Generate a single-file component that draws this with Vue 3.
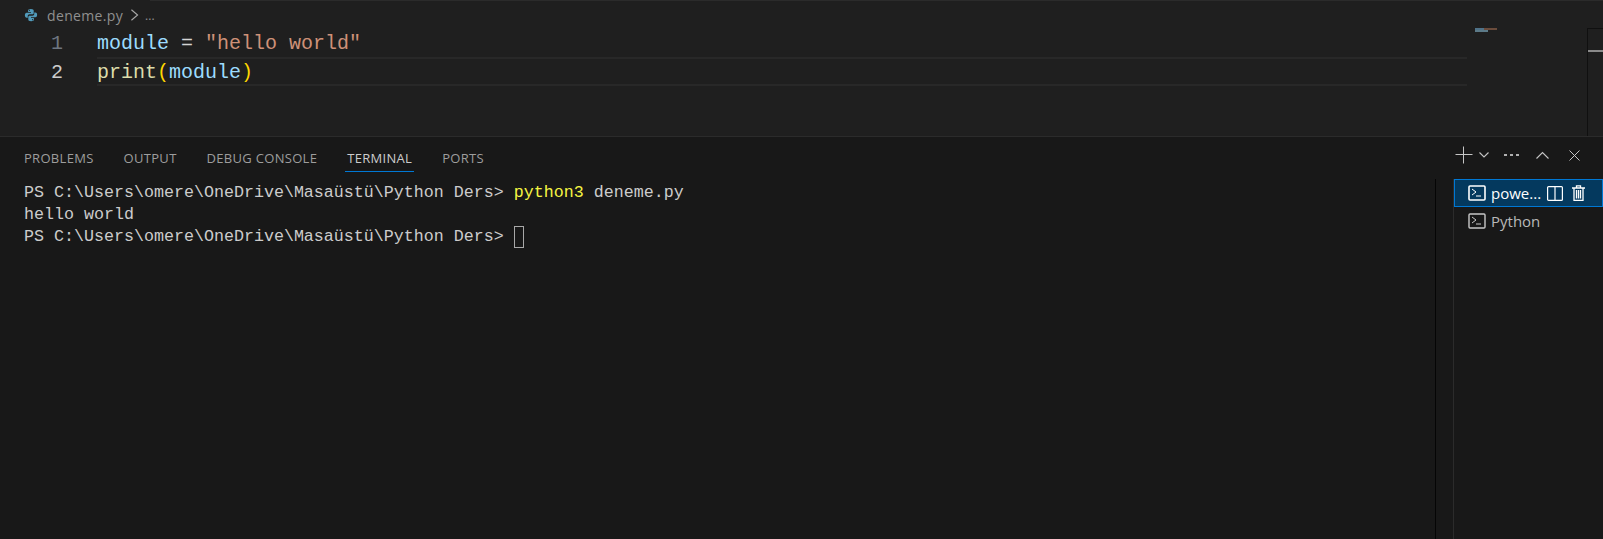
<script setup>
const tabs = [
  { name: 'PROBLEMS' },
  { name: 'OUTPUT' },
  { name: 'DEBUG CONSOLE' },
  { name: 'TERMINAL', active: true },
  { name: 'PORTS' }
]
const prompt = 'PS C:\\Users\\omere\\OneDrive\\Masaüstü\\Python Ders>'
</script>

<template>
  <div class="window">
    <section class="editor">
      <div class="topline"></div>
      <div class="crumbs">
        <svg class="py" viewBox="0 0 16 16" width="14" height="14">
          <path fill="#519aba" d="M7.900 1C5.200 1 4.700 2 4.700 3v1.700H8v.6H3C1.800 5.300 1 6.300 1 8.200s.9 2.800 2 2.800h1.300V9.200c0-1.100.9-2 2-2h3.200c.9 0 1.600-.7 1.600-1.600V3c0-1.100-1-2-3.200-2zM6.200 2.100a.6.6 0 1 1 0 1.200.6.6 0 0 1 0-1.200z"/>
          <path fill="#519aba" d="M8.100 15c2.700 0 3.200-1 3.200-2v-1.700H8v-.6h5c1.200 0 2-1 2-2.900s-.9-2.800-2-2.800h-1.300v1.800c0 1.100-.9 2-2 2H6.500c-.9 0-1.600.7-1.600 1.600V13c0 1.100 1 2 3.200 2zm1.700-1.100a.6.6 0 1 1 0-1.200.6.6 0 0 1 0 1.200z"/>
        </svg>
        <span class="file">deneme.py</span>
        <svg class="sep" viewBox="0 0 10 16" width="9" height="14"><path d="M1.500 2l7 6-7 6" fill="none" stroke="#a8a8a8" stroke-width="1.300"/></svg>
        <span class="more">...</span>
      </div>
      <div class="code">
        <div class="line">
          <span class="num">1</span>
          <span class="src"><span class="var">module</span> <span class="op">=</span> <span class="str">"hello world"</span></span>
        </div>
        <div class="line current">
          <span class="num now">2</span>
          <span class="src"><span class="fn">print</span><span class="paren">(</span><span class="var">module</span><span class="paren">)</span></span>
        </div>
      </div>
      <div class="minimap">
        <i class="m1"></i><i class="m2"></i><i class="m3"></i>
      </div>
      <div class="ruler"><i></i></div>
    </section>

    <section class="panel">
      <header class="panel-head">
        <nav class="tabs">
          <span v-for="t in tabs" :key="t.name" class="tab" :class="{ active: t.active }">{{ t.name }}</span>
        </nav>
        <div class="actions">
          <svg width="18" height="18" viewBox="0 0 18 18"><path d="M8.500 0.500v17M0.500 8.500h17" stroke="#c5c5c5" stroke-width="1" fill="none"/></svg>
          <svg class="caret" width="10" height="6" viewBox="0 0 10 6"><path d="M0.500 0.500L5 5l4.500-4.500" stroke="#c5c5c5" stroke-width="1.100" fill="none"/></svg>
          <svg class="dots" width="15" height="3" viewBox="0 0 15 3"><path d="M0 0h3v2H0zM6 0h3v2H6zM12 0h3v2h-3z" fill="#b0b0b0"/></svg>
          <svg class="up" width="13" height="8" viewBox="0 0 13 8"><path d="M0.500 7.500l6-6 6 6" stroke="#c5c5c5" stroke-width="1.100" fill="none"/></svg>
          <svg class="close" width="11" height="11" viewBox="0 0 11 11"><path d="M0.500 0.500l10 10M10.500 0.500l-10 10" stroke="#c5c5c5" stroke-width="1" fill="none"/></svg>
        </div>
      </header>
      <div class="panel-body">
        <div class="term">
          <div class="tline">{{ prompt }} <span class="cmd">python3</span> deneme.py</div>
          <div class="tline">hello world</div>
          <div class="tline">{{ prompt }} <span class="cursor"></span></div>
        </div>
        <div class="term-scroll"></div>
        <aside class="sessions">
          <div class="session selected">
            <svg width="18" height="16" viewBox="0 0 18 16"><rect x="1" y="1" width="16" height="14" rx="1" fill="none" stroke="#fff" stroke-width="1.600"/><path d="M4 4l4 3-4 3M8 11h5" stroke="#fff" stroke-width="1" fill="none"/></svg>
            <span class="label">powe...</span>
            <svg class="split" width="16" height="15" viewBox="0 0 16 15"><rect x="0.600" y="0.600" width="14.800" height="13.800" rx="1" fill="none" stroke="#fff" stroke-width="1.200"/><path d="M8 0.500v14" stroke="#fff" stroke-width="1.200"/></svg>
            <svg class="trash" width="13" height="16" viewBox="0 0 13 16"><path d="M0 3h13M4.500 3V0.800h4V3M2 3v12.300h9V3M4.500 5v8.500M6.500 5v8.500M8.500 5v8.500" stroke="#fff" stroke-width="1.300" fill="none"/></svg>
          </div>
          <div class="session">
            <svg width="18" height="16" viewBox="0 0 18 16"><rect x="1" y="1" width="16" height="14" rx="1" fill="none" stroke="#c8c8c8" stroke-width="1.400"/><path d="M4 4l4 3-4 3M8 11h5" stroke="#c8c8c8" stroke-width="1" fill="none"/></svg>
            <span class="label">Python</span>
          </div>
        </aside>
      </div>
    </section>
  </div>
</template>

<style scoped>
.window {
  width: 1603px;
  height: 539px;
  overflow: hidden;
  background: #181818;
  display: flex;
  flex-direction: column;
  font-family: "Open Sans", "Noto Sans", sans-serif;
}
.editor {
  position: relative;
  height: 136px;
  flex: none;
  background: #1f1f1f;
  border-bottom: 1px solid #2b2b2b;
  box-sizing: content-box;
}
.topline { position: absolute; left: 150px; right: 0; top: 0; height: 1px; background: #2b2b2b; }
.crumbs {
  height: 28px;
  padding-top: 2px;
  box-sizing: border-box;
  display: flex;
  align-items: center;
  padding-left: 24px;
  font-size: 14px;
  color: #8f8f8f;
}
.py { margin-right: 9px; }
.file { letter-spacing: 0.35px; }
.sep { margin: 0 6px 0 7px; }
.more { font-size: 12px; }
.code {
  font-family: "Liberation Mono", monospace;
  font-size: 20px;
}
.line {
  height: 29px;
  line-height: 31px;
  display: flex;
}
.num {
  width: 63px;
  text-align: right;
  color: #6e7681;
  flex: none;
}
.now { color: #cccccc; }
.src {
  margin-left: 34px;
  width: 1370px;
  white-space: pre;
  color: #cccccc;
  box-sizing: border-box;
}
.current .src {
  border-top: 2px solid #282828;
  border-bottom: 2px solid #282828;
  line-height: 27px;
}
.var { color: #9cdcfe; }
.op { color: #d4d4d4; }
.str { color: #ce9178; }
.fn { color: #dcdcaa; }
.paren { color: #ffd700; }
.minimap { position: absolute; left: 1475px; top: 28px; width: 24px; height: 5px; }
.minimap i { position: absolute; height: 2px; display: block; }
.m1 { left: 0; top: 0; width: 9px; background: #4f7288; }
.m2 { left: 9px; top: 0; width: 13px; background: #6b4c3c; }
.m3 { left: 0; top: 2px; width: 13px; background: #5c7a88; }
.ruler { position: absolute; left: 1587px; top: 28px; bottom: 0; width: 16px; border-left: 1px solid #101010; border-top: 1px solid #101010; box-sizing: border-box; }
.ruler i { position: absolute; left: 0; right: 0; top: 21px; height: 2px; background: #8a8a8a; display: block; }

.panel { flex: 1; display: flex; flex-direction: column; min-height: 0; }
.panel-head {
  height: 42px;
  flex: none;
  display: flex;
  align-items: flex-start;
  justify-content: space-between;
}
.tabs { display: flex; gap: 30px; padding-left: 24px; }
.tab {
  font-size: 13px;
  letter-spacing: 0.3px;
  line-height: 18px;
  padding-top: 12px;
  padding-bottom: 4px;
  height: 35px;
  box-sizing: border-box;
  color: #9d9d9d;
  border-bottom: 1px solid transparent;
  white-space: nowrap;
}
.tab.active { color: #cccccc; border-bottom-color: #0078d4; margin: 0 -2px; padding: 12px 2px 4px; }
.actions { display: flex; align-items: center; height: 36px; padding-right: 23px; }
.caret { margin-left: 6px; }
.dots { margin-left: 15px; }
.up { margin-left: 17px; }
.close { margin-left: 20px; }

.panel-body { flex: 1; display: flex; min-height: 0; }
.term {
  width: 1435px;
  flex: none;
  padding: 3px 0 0 24px;
  box-sizing: border-box;
  font-family: "Liberation Mono", monospace;
  font-size: 16.67px;
  color: #cccccc;
}
.tline { height: 22px; line-height: 22px; white-space: pre; }
.cmd { color: #f5f543; }
.cursor {
  display: inline-block;
  width: 10px;
  height: 22px;
  box-sizing: border-box;
  border: 1px solid #a8a8a8;
  vertical-align: top;
}
.term-scroll { width: 19px; flex: none; border-left: 1px solid #050505; box-sizing: border-box; }
.sessions { flex: 1; border-left: 1px solid #2b2b2b; margin-left: -1px; min-width: 0; }
.session {
  height: 28px;
  display: flex;
  align-items: center;
  padding-left: 14px;
  box-sizing: border-box;
  font-size: 15px;
  color: #b8b8b8;
}
.session .label { margin-left: 5px; }
.selected {
  background: #04395e;
  border: 1px solid #0078d4;
  padding-left: 13px;
  color: #ffffff;
}
.split { margin-left: 6px; }
.trash { margin-left: 9px; }
</style>
